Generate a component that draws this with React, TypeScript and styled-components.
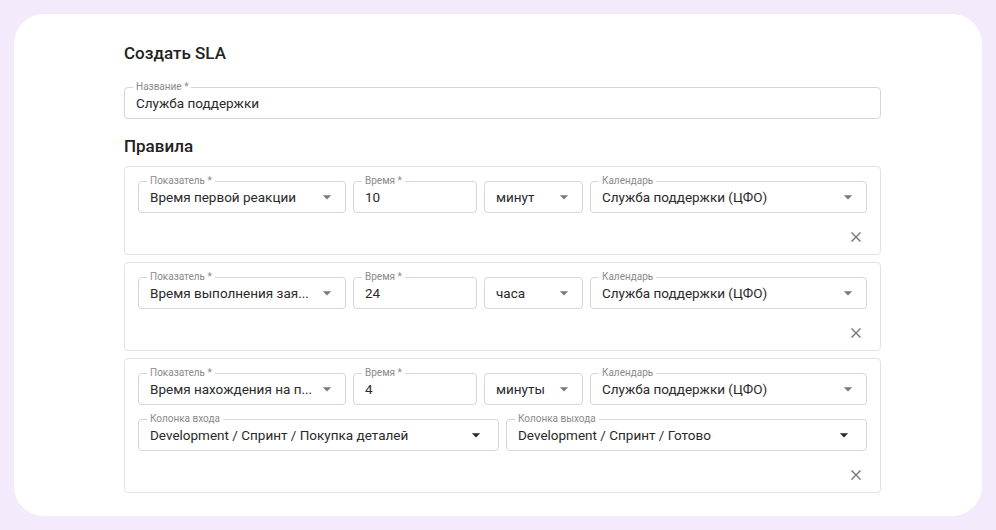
import styled, { createGlobalStyle } from 'styled-components';

type RuleField = {
  label: string;
  value: string;
  width?: number;
  select?: boolean;
  dark?: boolean;
};

type Rule = {
  rows: RuleField[][];
};

const rules: Rule[] = [
  {
    rows: [
      [
        { label: 'Показатель *', value: 'Время первой реакции', width: 208, select: true },
        { label: 'Время *', value: '10', width: 124 },
        { label: '', value: 'минут', width: 99, select: true },
        { label: 'Календарь', value: 'Служба поддержки (ЦФО)', select: true },
      ],
    ],
  },
  {
    rows: [
      [
        { label: 'Показатель *', value: 'Время выполнения зая...', width: 208, select: true },
        { label: 'Время *', value: '24', width: 124 },
        { label: '', value: 'часа', width: 99, select: true },
        { label: 'Календарь', value: 'Служба поддержки (ЦФО)', select: true },
      ],
    ],
  },
  {
    rows: [
      [
        { label: 'Показатель *', value: 'Время нахождения на п...', width: 208, select: true },
        { label: 'Время *', value: '4', width: 124 },
        { label: '', value: 'минуты', width: 99, select: true },
        { label: 'Календарь', value: 'Служба поддержки (ЦФО)', select: true },
      ],
      [
        { label: 'Колонка входа', value: 'Development / Спринт / Покупка деталей', select: true, dark: true },
        { label: 'Колонка выхода', value: 'Development / Спринт / Готово', select: true, dark: true },
      ],
    ],
  },
];

function ArrowDown({ dark }: { dark?: boolean }) {
  return (
    <Arrow $dark={dark} viewBox="0 0 24 24" width="20" height="20">
      <path d="M7 10l5 5 5-5z" />
    </Arrow>
  );
}

function CloseIcon() {
  return (
    <svg viewBox="0 0 10 10" width="10" height="10">
      <path d="M0.5 0.5L9.5 9.5M9.5 0.5L0.5 9.5" stroke="#757575" strokeWidth="1.4" />
    </svg>
  );
}

function Field({ label, value, width, select, dark }: RuleField) {
  return (
    <FieldBox $width={width}>
      {label && <FieldLabel>{label}</FieldLabel>}
      <FieldValue $select={select} $dark={dark}>{value}</FieldValue>
      {select && <ArrowDown dark={dark} />}
    </FieldBox>
  );
}

function App() {
  return (
    <>
      <GlobalStyle />
      <Page>
        <Card>
          <Title>Создать SLA</Title>
          <NameField>
            <FieldLabel>Название *</FieldLabel>
            <FieldValue>Служба поддержки</FieldValue>
          </NameField>
          <SectionTitle>Правила</SectionTitle>
          <RuleList>
            {rules.map((rule, i) => (
              <RuleCard key={i}>
                {rule.rows.map((row, j) => (
                  <FieldRow key={j}>
                    {row.map((f, k) => (
                      <Field key={k} {...f} />
                    ))}
                  </FieldRow>
                ))}
                <RuleFooter>
                  <CloseButton>
                    <CloseIcon />
                  </CloseButton>
                </RuleFooter>
              </RuleCard>
            ))}
          </RuleList>
        </Card>
      </Page>
    </>
  );
}

export default App;

// styles
const GlobalStyle = createGlobalStyle`
  html, body {
    margin: 0;
    padding: 0;
    background: #f3ebfc;
  }
  body {
    font-family: Roboto, 'Noto Sans', sans-serif;
    color: rgba(0, 0, 0, 0.87);
  }
`;

const Page = styled.div`
  width: 996px;
  height: 530px;
  padding: 14px;
  box-sizing: border-box;
`;

const Card = styled.div`
  background: #ffffff;
  border-radius: 30px;
  height: 502px;
  box-sizing: border-box;
  padding: 29px 101px 0 110px;
  display: flex;
  flex-direction: column;
`;

const Title = styled.h1`
  margin: 0;
  font-size: 17px;
  line-height: 20px;
  font-weight: 500;
  color: #222222;
`;

const SectionTitle = styled.h2`
  margin: 17px 0 0;
  font-size: 17px;
  line-height: 20px;
  font-weight: 500;
  color: #222222;
`;

const FieldBox = styled.div<{ $width?: number }>`
  position: relative;
  height: 32px;
  box-sizing: border-box;
  border: 1px solid #d6d6d6;
  border-radius: 4px;
  display: flex;
  align-items: center;
  ${(p) => (p.$width ? `width: ${p.$width}px; flex: none;` : 'flex: 1; min-width: 0;')}
`;

const NameField = styled(FieldBox)`
  margin-top: 24px;
  width: 757px;
  flex: none;
`;

const FieldLabel = styled.span`
  position: absolute;
  top: -8px;
  left: 8px;
  padding: 0 3px;
  background: #ffffff;
  font-size: 10px;
  line-height: 14px;
  color: #8a8a8a;
  white-space: nowrap;
`;

const FieldValue = styled.span<{ $select?: boolean; $dark?: boolean }>`
  flex: 1;
  min-width: 0;
  padding-left: 11px;
  padding-right: ${(p) => (p.$select ? (p.$dark ? '14px' : '2px') : '11px')};
  font-size: 13.5px;
  line-height: 18px;
  color: #2a2a2a;
  white-space: nowrap;
  overflow: hidden;
`;

const Arrow = styled.svg<{ $dark?: boolean }>`
  flex: none;
  margin-right: ${(p) => (p.$dark ? '12px' : '8px')};
  fill: ${(p) => (p.$dark ? '#2b2b2b' : '#7a7a7a')};
`;

const RuleList = styled.div`
  margin-top: 10px;
  display: flex;
  flex-direction: column;
  gap: 7px;
`;

const RuleCard = styled.div`
  border: 1px solid #e2e2e2;
  border-radius: 4px;
  padding: 14px 13px 0;
  display: flex;
  flex-direction: column;
  gap: 14px;
`;

const FieldRow = styled.div`
  display: flex;
  gap: 7px;
`;

const RuleFooter = styled.div`
  display: flex;
  justify-content: flex-end;
  margin-top: 5px;
  padding: 0 6px 12px 0;
`;

const CloseButton = styled.button`
  border: none;
  background: none;
  padding: 0;
  width: 10px;
  height: 10px;
  display: flex;
  cursor: pointer;
`;
